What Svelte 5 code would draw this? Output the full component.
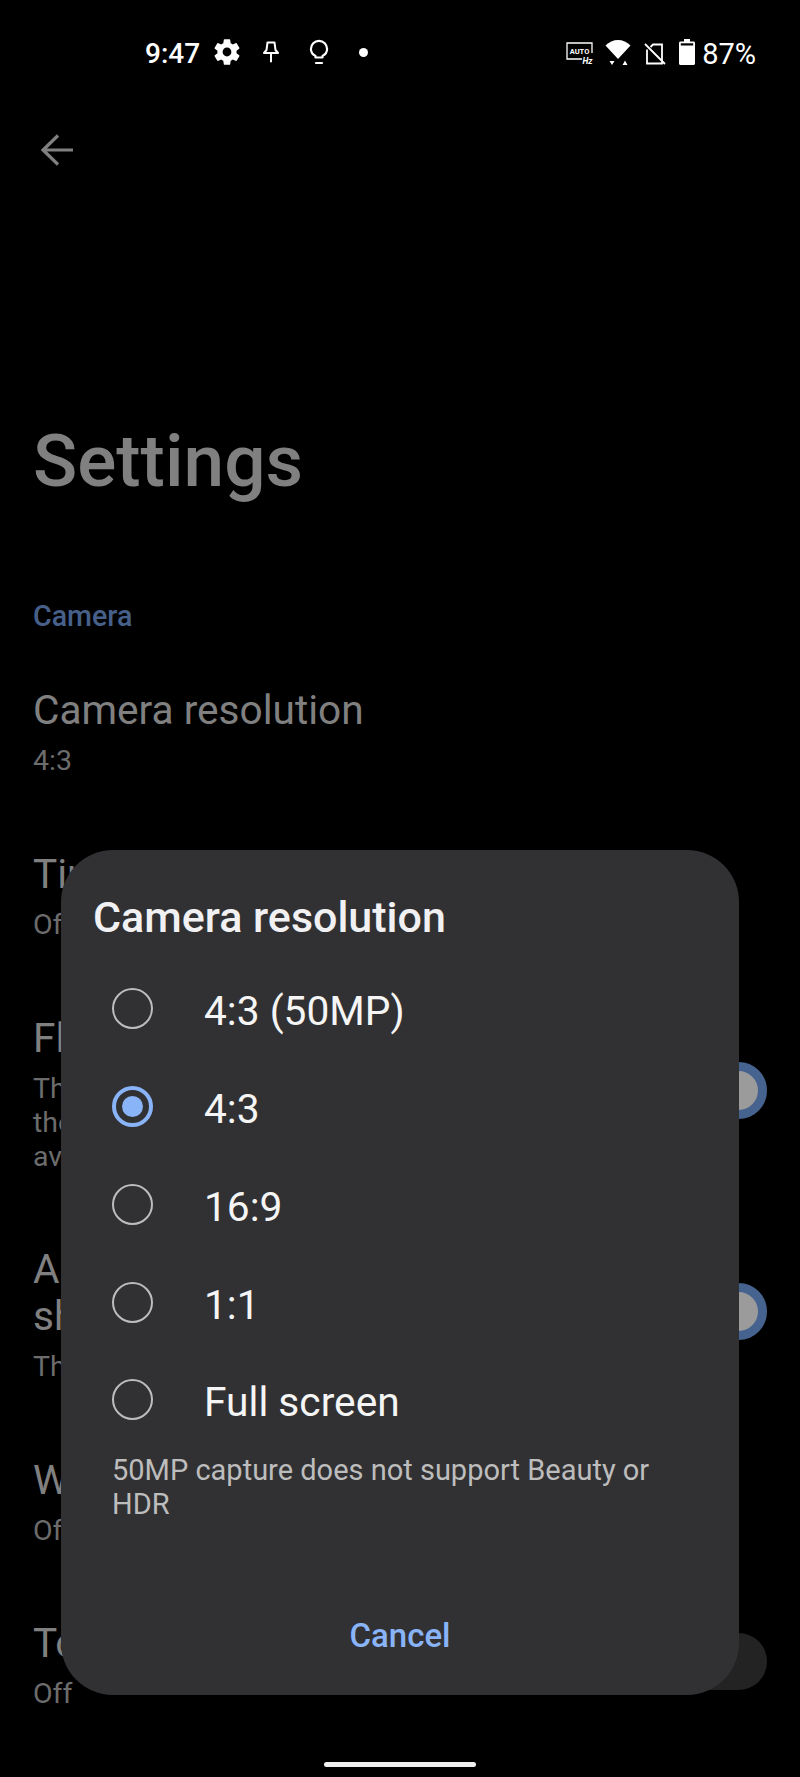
<script>
  const options = [
    { label: '4:3 (50MP)', selected: false },
    { label: '4:3', selected: true },
    { label: '16:9', selected: false },
    { label: '1:1', selected: false },
    { label: 'Full screen', selected: false }
  ];
</script>

<div class="screen">
  <header class="status">
    <span class="time">9:47</span>
    <svg class="gear" viewBox="0 0 24 24" width="32" height="32"><path fill="#fff" d="M19.14 12.94c.04-.3.06-.61.06-.94 0-.32-.02-.64-.07-.94l2.03-1.58c.18-.14.23-.41.12-.61l-1.92-3.32c-.12-.22-.37-.29-.59-.22l-2.39.96c-.5-.38-1.03-.7-1.62-.94l-.36-2.54c-.04-.24-.24-.41-.48-.41h-3.84c-.24 0-.43.17-.47.41l-.36 2.54c-.59.24-1.13.57-1.62.94l-2.39-.96c-.22-.08-.47 0-.59.22L2.74 8.87c-.12.21-.08.47.12.61l2.03 1.58c-.05.3-.09.63-.09.94s.02.64.07.94l-2.03 1.58c-.18.14-.23.41-.12.61l1.92 3.32c.12.22.37.29.59.22l2.39-.96c.5.38 1.03.7 1.62.94l.36 2.54c.05.24.24.41.48.41h3.84c.24 0 .44-.17.47-.41l.36-2.54c.59-.24 1.13-.56 1.62-.94l2.39.96c.22.08.47 0 .59-.22l1.92-3.32c.12-.22.07-.47-.12-.61l-2.01-1.58zM12 15.3c-1.82 0-3.3-1.48-3.3-3.3s1.48-3.3 3.3-3.3 3.3 1.48 3.3 3.3-1.48 3.3-3.3 3.3z"/></svg>
    <svg class="pin" viewBox="0 0 16 22" width="16" height="22"><path fill="none" stroke="#fff" stroke-width="2" stroke-linejoin="round" stroke-linecap="round" d="M4.500 1.500h7l1 7.500 2.500 3H1l2.500-3zM8 12v8.500"/></svg>
    <svg class="bulb" viewBox="0 0 20 26" width="20" height="26"><path fill="none" stroke="#fff" stroke-width="2.200" stroke-linecap="round" stroke-linejoin="round" d="M6.500 18.500v-1.600c-2.600-1.400-4.600-3.800-4.600-7C1.900 5.400 5.500 1.800 10 1.800s8.100 3.600 8.100 8.100c0 3.200-2 5.600-4.600 7v1.600zM7 24h6"/></svg>
    <span class="dot"></span>
    <span class="spacer"></span>
    <svg class="auto" viewBox="0 0 27 23" width="27" height="23">
      <path fill="none" stroke="#fff" stroke-width="1.300" d="M16 17H1V1h25v10"/>
      <text x="13.500" y="12" text-anchor="middle" class="autotxt">AUTO</text>
      <text x="26.500" y="22" text-anchor="end" class="hz">Hz</text>
    </svg>
    <svg class="wifi" viewBox="0 0 26 27" width="26" height="27">
      <path fill="#fff" d="M0.500 6.500C4 3 8.300 1 13 1s9 2 12.500 5.500L13 20z"/>
      <path fill="#fff" d="M4.500 22h5l-2.500 4zM17.500 26h5l-2.500-4.500z"/>
    </svg>
    <svg class="sim" viewBox="0 0 22 22" width="22" height="22">
      <path fill="none" stroke="#fff" stroke-width="1.800" d="M3 6.500V20.500H18V1.500H9L6.500 4M1 1l20 20"/>
    </svg>
    <svg class="batt" viewBox="0 0 16 26" width="16" height="26">
      <path fill="#fff" d="M5 0h6v2.500h3.500c.8 0 1.500.7 1.500 1.500v20.500c0 .8-.7 1.500-1.500 1.500h-13C.7 26 0 25.300 0 24.500V4c0-.8.7-1.500 1.500-1.500H5z"/>
      <rect x="1.800" y="4.300" width="12.400" height="2.200" fill="#000"/>
    </svg>
    <span class="pct">87%</span>
  </header>

  <svg class="back" viewBox="0 0 34 34" width="34" height="34"><path fill="none" stroke="#808080" stroke-width="3.200" d="M33 17H3M18 2.500 3 17l15 14.500"/></svg>

  <main class="page">
    <h1>Settings</h1>
    <div class="section">Camera</div>

    <div class="row first"><div class="body"><div class="title">Camera resolution</div><div class="sum">4:3</div></div></div>
    <div class="row"><div class="body"><div class="title">Timer</div><div class="sum">Off</div></div></div>
    <div class="row">
      <div class="body"><div class="title">Flash</div><div class="sum">The<br />the<br />av</div></div>
      <span class="toggle on"><span class="thumb"></span></span>
    </div>
    <div class="row">
      <div class="body"><div class="title">A<br />sh</div><div class="sum">The</div></div>
      <span class="toggle on"><span class="thumb"></span></span>
    </div>
    <div class="row"><div class="body"><div class="title">Wa</div><div class="sum">Off</div></div></div>
    <div class="row">
      <div class="body"><div class="title">To</div><div class="sum">Off</div></div>
      <span class="toggle off"></span>
    </div>
  </main>

  <section class="dialog">
    <h2>Camera resolution</h2>
    <div class="options">
      {#each options as o}
        <div class="option">
          <span class="radio" class:sel={o.selected}>{#if o.selected}<span class="inner"></span>{/if}</span>
          <span class="label">{o.label}</span>
        </div>
      {/each}
    </div>
    <p class="help">50MP capture does not support Beauty or<br />HDR</p>
    <div class="actions"><span class="cancel">Cancel</span></div>
  </section>

  <div class="home"></div>
</div>

<style>
  :global(body) { margin: 0; background: #000; }
  .screen {
    position: relative;
    width: 800px;
    height: 1777px;
    overflow: hidden;
    background: #000;
    font-family: Roboto, "Liberation Sans", sans-serif;
  }
  .status {
    display: flex;
    align-items: center;
    height: 104px;
    box-sizing: border-box;
    padding: 0 44px 0 145px;
    color: #fff;
  }
  .time { font-size: 28px; font-weight: 500; line-height: 32px; margin-top: 4px; }
  .gear { margin-left: 11px; }
  .pin { margin-left: 20px; }
  .bulb { margin-left: 30px; }
  .dot { width: 9px; height: 9px; border-radius: 50%; background: #fff; margin-left: 30px; }
  .spacer { flex: 1; }
  .auto { margin-top: 2px; }
  .autotxt { font: 700 7.500px Roboto, sans-serif; fill: #fff; }
  .hz { font: italic 700 8.500px Roboto, sans-serif; fill: #fff; }
  .wifi { margin-left: 12px; }
  .sim { margin-left: 13px; margin-top: 3px; }
  .batt { margin-left: 13px; }
  .pct { font-size: 29px; line-height: 32px; margin-left: 7px; margin-top: 4px; }

  .back { display: block; margin: 29px 0 0 40px; }

  .page { padding-left: 33px; }
  h1 {
    margin: 0;
    margin-top: 254px;
    font-size: 73px;
    line-height: 80px;
    font-weight: 500;
    color: #808080;
  }
  .section {
    margin-top: 97px;
    font-size: 28.600px;
    line-height: 36px;
    font-weight: 500;
    color: #47608a;
  }
  .row { display: flex; align-items: center; padding: 36.250px 33px 36.250px 0; }
  .row.first { padding-top: 53px; padding-bottom: 37px; }
  .body { flex: 1; min-width: 0; }
  .title { font-size: 40.600px; line-height: 47px; color: #808080; margin-bottom: 10px; }
  .sum { font-size: 28.500px; line-height: 34px; color: #6c6c6c; }
  .toggle {
    display: flex;
    width: 100px;
    height: 57px;
    border-radius: 29px;
    margin-bottom: 8px;
    justify-content: flex-end;
  }
  .toggle.off { background: #232323; }
  .thumb {
    width: 57px;
    height: 57px;
    box-sizing: border-box;
    border-radius: 50%;
    background: #9b9b9b;
    border: 9px solid #46628f;
  }

  .dialog {
    position: absolute;
    left: 61px;
    top: 850px;
    width: 678px;
    height: 845px;
    box-sizing: border-box;
    display: flex;
    flex-direction: column;
    background: #313133;
    border-radius: 52px;
    padding: 44px 0 39px;
  }
  h2 {
    margin: 0 0 20px 32px;
    font-size: 43px;
    line-height: 46px;
    font-weight: 500;
    color: #f1f1f3;
  }
  .option { display: flex; align-items: center; height: 97.750px; padding-left: 51px; }
  .radio {
    display: flex;
    align-items: center;
    justify-content: center;
    width: 41px;
    height: 41px;
    box-sizing: border-box;
    border: 2.500px solid #bdbdbd;
    border-radius: 50%;
  }
  .radio.sel { border: 4px solid #8ab4f8; }
  .inner { width: 21px; height: 21px; border-radius: 50%; background: #8ab4f8; }
  .label {
    margin-left: 51px;
    padding-top: 5px;
    font-size: 40.700px;
    line-height: 46px;
    color: #f5f5f5;
  }
  .help {
    margin: 4px 0 0 51px;
    font-size: 29px;
    line-height: 34.500px;
    color: #bdbdbd;
  }
  .actions { margin-top: auto; display: flex; justify-content: center; }
  .cancel { font-size: 33px; line-height: 40px; font-weight: 500; color: #8ab4f8; }

  .home {
    position: absolute;
    left: 324px;
    top: 1762px;
    width: 152px;
    height: 5px;
    border-radius: 3px;
    background: #f0f0f0;
  }
</style>
